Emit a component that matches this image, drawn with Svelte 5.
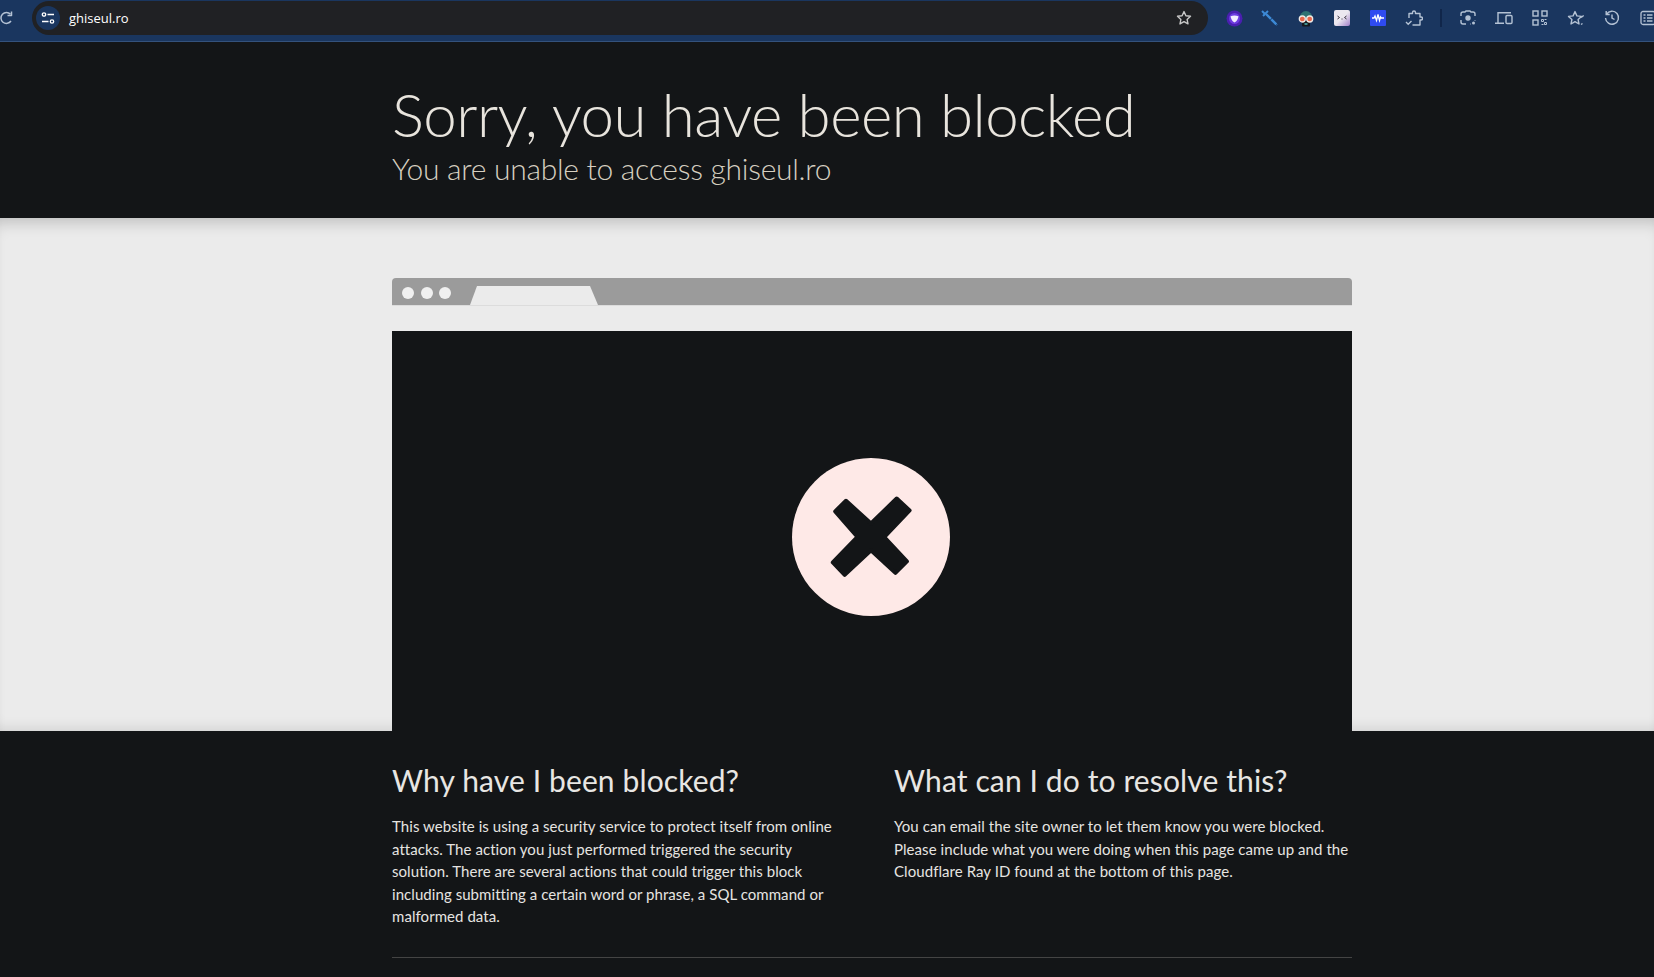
<script>
  const whyText = 'This website is using a security service to protect itself from online attacks. The action you just performed triggered the security solution. There are several actions that could trigger this block including submitting a certain word or phrase, a SQL command or malformed data.';
  const whatText = 'You can email the site owner to let them know you were blocked. Please include what you were doing when this page came up and the Cloudflare Ray ID found at the bottom of this page.';
</script>

<div class="page">
  <div class="toolbar">
    <svg class="reload" width="14" height="16" viewBox="0 0 14 16" fill="none" stroke="#b4c2d4" stroke-width="1.5">
      <path d="M11 11A5.500 5.500 0 1 1 10.500 4.200"/>
      <path d="M11.500 1.500v4h-4" stroke-linejoin="round"/>
    </svg>
    <div class="omnibox">
      <span class="chip">
        <svg width="14" height="14" viewBox="0 0 14 14" fill="none" stroke="#fff" stroke-width="1.3">
          <circle cx="3" cy="3.500" r="1.700"/>
          <path d="M6.500 3.500h6.500M1 10.500h6.500"/>
          <circle cx="11" cy="10.500" r="1.700"/>
        </svg>
      </span>
      <span class="url">ghiseul.ro</span>
      <svg class="star" width="16" height="16" viewBox="0 0 16 16" fill="none" stroke="#c8c8c8" stroke-width="1.400">
        <path d="M8 1.600l1.900 4.200 4.600.5-3.400 3.100.9 4.500-4-2.300-4 2.300.9-4.500L1.500 6.300l4.600-.5z" stroke-linejoin="round"/>
      </svg>
    </div>
    <div class="icons">
      <span class="slot">
        <svg width="17" height="17" viewBox="0 0 17 17">
          <circle cx="8.500" cy="8.500" r="8" fill="#4a1fb0"/>
          <circle cx="8.500" cy="8.500" r="5.500" fill="#6d3be0"/>
          <path d="M4.500 6.200q4-1.400 8 0q-.6 4.300-4 6.300q-3.400-2-4-6.300z" fill="#f1eaff"/>
        </svg>
      </span>
      <span class="slot">
        <svg width="18" height="18" viewBox="0 0 18 18" fill="none" stroke="#3d8ad6">
          <path d="M5 5l11 11" stroke-width="2.400" stroke-dasharray="7 0.600"/>
          <path d="M2 7l5-5" stroke-width="2"/>
          <path d="M1 2l3 3" stroke-width="2"/>
        </svg>
      </span>
      <span class="slot">
        <svg width="18" height="18" viewBox="0 0 18 18">
          <path d="M2.500 9.500a6.500 7.500 0 0 1 13 0z" fill="#2e7272"/>
          <rect x="5" y="12" width="8" height="5.500" rx="1" fill="#15171c"/>
          <rect x="7.500" y="14" width="3" height="2" fill="#3f8f8f"/>
          <circle cx="5.300" cy="10" r="3" fill="#e8674a" stroke="#efe9e4" stroke-width="1.300"/>
          <circle cx="12.700" cy="10" r="3" fill="#e8674a" stroke="#efe9e4" stroke-width="1.300"/>
        </svg>
      </span>
      <span class="slot">
        <svg width="16" height="16" viewBox="0 0 16 16">
          <defs>
            <linearGradient id="tile" x1="0" y1="0" x2="1" y2="1">
              <stop offset="0.500" stop-color="#ece8f0"/>
              <stop offset="1" stop-color="#a17fc9"/>
            </linearGradient>
          </defs>
          <rect width="16" height="16" rx="2" fill="url(#tile)"/>
          <path d="M3.500 6l2 1.500-2 1.500M12.500 6l-2 1.500 2 1.500" fill="none" stroke="#3a3440"/>
          <path d="M7.500 9h1" stroke="#3a3440"/>
        </svg>
      </span>
      <span class="slot">
        <svg width="16" height="16" viewBox="0 0 16 16">
          <rect width="16" height="16" rx="1" fill="#2f4bf0"/>
          <path d="M2 8h2l1-2 1.500 4.500 1.500-6 1.500 6 1-3.500.8 1h2.700" fill="none" stroke="#fff" stroke-width="1.300"/>
        </svg>
      </span>
      <span class="slot">
        <svg width="18" height="18" viewBox="0 0 18 18" fill="none" stroke="#b4c2d4" stroke-width="1.400">
          <path d="M4 9V4.500h3.500V3.500a1.500 1.500 0 0 1 3 0v1H15V8h1a1.500 1.500 0 0 1 0 3h-1v5H7.500" stroke-linejoin="round"/>
          <path d="M1 13l2.200 2.200L6.500 12"/>
        </svg>
      </span>
      <span class="sep"></span>
      <span class="slot">
        <svg width="16" height="16" viewBox="0 0 16 16" fill="none" stroke="#b4c2d4" stroke-width="1.400">
          <path d="M1 6V4a2 2 0 0 1 2-2h2l1-1h4l1 1h2a2 2 0 0 1 2 2v2M1 10v2a2 2 0 0 0 2 2h3M15 10v.500M10 14h.500"/>
          <circle cx="8" cy="8" r="2" fill="#b4c2d4"/>
          <circle cx="13.500" cy="13" r="1.500" fill="#b4c2d4" stroke="none"/>
        </svg>
      </span>
      <span class="slot">
        <svg width="18" height="16" viewBox="0 0 18 16" fill="none" stroke="#b4c2d4" stroke-width="1.400">
          <path d="M3 13V2.700h13M0 13.300h9"/>
          <rect x="11" y="5.500" width="6" height="8" rx="1"/>
        </svg>
      </span>
      <span class="slot">
        <svg width="16" height="16" viewBox="0 0 16 16" fill="none" stroke="#b4c2d4" stroke-width="1.400">
          <rect x="1" y="1" width="5" height="5"/>
          <rect x="10" y="1" width="5" height="5"/>
          <rect x="1" y="10" width="5" height="5"/>
          <path d="M9.500 9.500h2v2h-2zM12.500 12.500h2v2h-2zM12.500 9.500h2M9.500 14.500h2" stroke-width="1"/>
        </svg>
      </span>
      <span class="slot">
        <svg width="18" height="17" viewBox="0 0 18 17" fill="none" stroke="#b4c2d4" stroke-width="1.400">
          <path d="M8 1.600l1.900 4.300 4.600.5-3.400 3.100.9 4.500-4-2.300-4 2.300.9-4.500L1.500 6.400l4.600-.5z" stroke-linejoin="round"/>
          <path d="M14 14.500l1.500-1M13 6.800l1.700.2 2-1.500"/>
        </svg>
      </span>
      <span class="slot">
        <svg width="16" height="16" viewBox="0 0 16 16" fill="none" stroke="#b4c2d4" stroke-width="1.400">
          <path d="M2.500 4.200A6.500 6.500 0 1 1 1.500 8M2.200 1v3.500h3.500M8 4.500V8l2.500 1.500"/>
        </svg>
      </span>
      <span class="slot">
        <svg width="16" height="16" viewBox="0 0 16 16" fill="none" stroke="#b4c2d4" stroke-width="1.300">
          <rect x="1" y="1.500" width="14" height="13" rx="2"/>
          <path d="M3.500 5h2M7 5h5.500M3.500 8h2M7 8h5.500M3.500 11h2M7 11h5.500"/>
        </svg>
      </span>
    </div>
  </div>

  <header class="banner">
    <div class="wrap">
      <h1>Sorry, you have been blocked</h1>
      <h2 class="sub">You are unable to access ghiseul.ro</h2>
    </div>
  </header>

  <section class="stage">
    <div class="wrap">
      <div class="browser-bar">
        <span class="dot"></span><span class="dot"></span><span class="dot"></span>
        <span class="tab"></span>
      </div>
      <div class="window">
        <svg width="158" height="158" viewBox="0 0 158 158">
          <circle cx="79" cy="79" r="79" fill="#fee9e7"/>
          <path d="M54 42.800L79 65.500 104.700 40.500 117.600 52.400 92.200 79 114.900 103.400 103.400 114.900 79 92.200 52.700 116.900 40.800 104.400 65.500 79 43.200 53.400z" fill="#131517" stroke="#131517" stroke-width="4" stroke-linejoin="round"/>
        </svg>
      </div>
    </div>
  </section>

  <section class="info">
    <div class="wrap">
      <div class="columns">
        <div>
          <h2>Why have I been blocked?</h2>
          <p>{whyText}</p>
        </div>
        <div>
          <h2>What can I do to resolve this?</h2>
          <p>{whatText}</p>
        </div>
      </div>
      <hr />
    </div>
  </section>
</div>

<style>
  :global(body) {
    margin: 0;
    background: #131517;
  }

  .page {
    height: 977px;
    overflow: hidden;
    font-family: Lato, "Open Sans", sans-serif;
    background: #131517;
  }

  .toolbar {
    height: 42px;
    box-sizing: border-box;
    background: #1a365f;
    border-bottom: 1px solid #34527c;
    display: flex;
    align-items: flex-start;
    overflow: hidden;
  }

  .reload {
    margin-top: 10px;
    flex: none;
  }

  .omnibox {
    width: 1176px;
    height: 34px;
    margin: 1px 0 0 18px;
    border-radius: 17px;
    background: #202124;
    display: flex;
    align-items: center;
    flex: none;
  }

  .chip {
    width: 24px;
    height: 24px;
    margin-left: 4px;
    border-radius: 50%;
    background: #1a365f;
    display: flex;
    align-items: center;
    justify-content: center;
  }

  .url {
    margin-left: 9px;
    color: #fff;
    font-size: 13px;
    font-family: "Open Sans", sans-serif;
  }

  .star {
    margin-left: auto;
    margin-right: 16px;
  }

  .icons {
    margin: 9px 0 0 8px;
    display: flex;
    align-items: center;
    flex: none;
  }

  .slot {
    width: 36px;
    display: flex;
    justify-content: center;
    flex: none;
  }

  .sep {
    width: 2px;
    height: 18px;
    margin: 0 8px;
    background: #10264a;
    flex: none;
  }

  .wrap {
    width: 960px;
    margin-left: 392px;
  }

  .banner {
    height: 176px;
    box-sizing: border-box;
    padding-top: 36px;
    background: #131517;
  }

  h1 {
    margin: 0;
    color: #e8e4dd;
    font-size: 60px;
    font-weight: 300;
    line-height: 72px;
    letter-spacing: -0.53px;
  }

  .sub {
    margin: -1px 0 0;
    color: #d6cfc0;
    font-size: 30px;
    font-weight: 300;
    line-height: 38px;
    letter-spacing: -0.27px;
  }

  .stage {
    height: 513px;
    box-sizing: border-box;
    padding-top: 60px;
    background: #ebebeb;
    box-shadow: inset 0 14px 16px -10px rgba(0, 0, 0, 0.2), inset 0 -12px 14px -10px rgba(0, 0, 0, 0.12);
  }

  .browser-bar {
    height: 28px;
    box-sizing: border-box;
    padding: 3px 0 0 10px;
    background: #9b9b9b;
    border-bottom: 1px solid #dcdcdc;
    border-radius: 4px 4px 0 0;
    display: flex;
    align-items: center;
    gap: 6.500px;
    position: relative;
  }

  .dot {
    width: 12px;
    height: 12px;
    border-radius: 50%;
    background: #f0f0f0;
  }

  .tab {
    position: absolute;
    left: 78px;
    bottom: 0;
    width: 128px;
    height: 19px;
    background: #ebebeb;
    clip-path: polygon(7px 0, 120px 0, 128px 100%, 0 100%);
  }

  .window {
    height: 400px;
    margin-top: 25px;
    background: #131517;
    display: flex;
    align-items: center;
    justify-content: center;
  }

  .window svg {
    margin: 12px 1.500px 0 0;
  }

  .info {
    padding-top: 29px;
    color: #e6e4e1;
  }

  .columns {
    display: grid;
    grid-template-columns: 456px 458px;
    gap: 46px;
  }

  .info h2 {
    margin: 0;
    color: #e8e6e3;
    font-size: 30px;
    font-weight: 400;
    line-height: 40px;
    letter-spacing: 0.12px;
  }

  .info p {
    margin: 15px 0 0;
    font-size: 15px;
    line-height: 22.500px;
    letter-spacing: 0.06px;
  }

  hr {
    margin: 29px 0 0;
    border: none;
    border-top: 1px solid #444;
  }
</style>
